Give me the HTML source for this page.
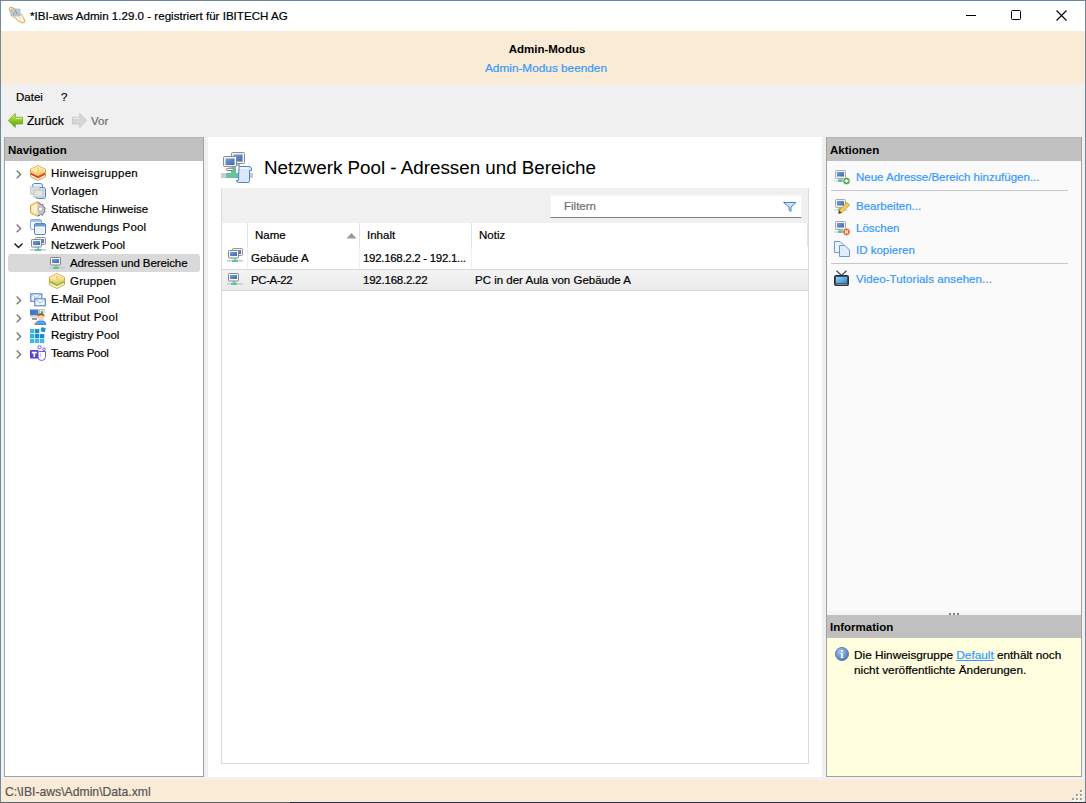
<!DOCTYPE html>
<html><head><meta charset="utf-8">
<style>
*{margin:0;padding:0;box-sizing:border-box}
html,body{width:1086px;height:803px;overflow:hidden;background:#f0f0f0;font-family:"Liberation Sans",sans-serif;font-size:11.5px;color:#000}
.a{position:absolute}
.t{position:absolute;white-space:nowrap;line-height:14px;font-size:11.5px;-webkit-text-stroke:0.2px currentColor}
.lnk{color:#3399ff}
svg{position:absolute;overflow:visible}
.t[style*="bold"]{-webkit-text-stroke:0}
</style></head><body>
<svg width="0" height="0" style="position:absolute"><defs>
<linearGradient id="gbox" x1="0" y1="0" x2="0" y2="1"><stop offset="0" stop-color="#fff4c8"/><stop offset="1" stop-color="#f0c050"/></linearGradient>
<linearGradient id="gscr" x1="0" y1="0" x2="1" y2="1"><stop offset="0" stop-color="#7aa0dc"/><stop offset="1" stop-color="#3a68b0"/></linearGradient>
<symbol id="ibox_r" viewBox="0 0 16 16"><path d="M8 0.5L15.5 4.3V11.7L8 15.5L0.5 11.7V4.3Z" fill="#fff6dc" stroke="#daa23a"/><path d="M8 1L15 4.5V8L8 11.5L1 8V4.5Z" fill="url(#gbox)"/><path d="M8 1L1 4.5L8 8Z" fill="#fde9a8"/><path d="M8 2.5V7.5" stroke="#e8b450" stroke-width="0.8"/><path d="M1 7.8L8 11.3L15 7.8V9.8L8 13.3L1 9.8Z" fill="#cc3a28"/><path d="M8 11.3L15 7.8V9.8L8 13.3Z" fill="#dd5030"/></symbol>
<symbol id="ibox_g" viewBox="0 0 16 16"><path d="M8 0.5L15.5 4.3V11.7L8 15.5L0.5 11.7V4.3Z" fill="#fff6dc" stroke="#daa23a"/><path d="M8 1L15 4.5V8L8 11.5L1 8V4.5Z" fill="url(#gbox)"/><path d="M8 1L1 4.5L8 8Z" fill="#fde9a8"/><path d="M8 2.5V7.5" stroke="#e8b450" stroke-width="0.8"/><path d="M1 7.8L8 11.3L15 7.8V9.8L8 13.3L1 9.8Z" fill="#7cc030"/><path d="M8 11.3L15 7.8V9.8L8 13.3Z" fill="#9ad040"/></symbol>
<symbol id="itpl" viewBox="0 0 16 16"><rect x="2.5" y="0.5" width="10" height="11" rx="2" fill="#e8f0fc" stroke="#4a86d0"/><rect x="5.5" y="4.5" width="10" height="11" rx="2" fill="#d0e2f8" stroke="#4a86d0"/><rect x="0.5" y="4" width="9" height="7" fill="#e0e0e0" stroke="#c8c8c8"/><rect x="4" y="7" width="9" height="7" fill="#e4e4e4" stroke="#c0c0c0"/></symbol>
<symbol id="istat" viewBox="0 0 16 16"><path d="M8 0.5V15.5L0.5 11.7V4.3Z" fill="#fbe0a0" stroke="#d9a23c"/><path d="M2 5L7.5 2.2V13.8L2 11Z" fill="#fdf0c8"/><path d="M8 2.5L9.8 1.8L10.8 3.8L13 3.3L13.3 5.8L15.5 7L14.2 9L15.3 11L13 12L12.8 14.3L10.5 13.5L9 15L8 14" fill="#c8c8c8" stroke="#707070" stroke-width="0.9"/><circle cx="10.3" cy="8" r="2" fill="#fff" stroke="#909090" stroke-width="0.6"/></symbol>
<symbol id="iwin" viewBox="0 0 16 16"><rect x="0.5" y="0.5" width="11" height="10" rx="1.5" fill="#f4f8fe" stroke="#86aee0"/><rect x="1" y="1" width="10" height="2" fill="#a8c6ec"/><rect x="4.5" y="4.5" width="11" height="11" rx="1.5" fill="#fff" stroke="#4e86cc"/><rect x="5" y="5" width="10" height="2.5" fill="#6a9ad8"/><rect x="6" y="9" width="8" height="5" fill="#e8f0fa"/></symbol>
<symbol id="inet1" viewBox="0 0 16 16"><rect x="1.5" y="2.5" width="10" height="7.5" rx="0.8" fill="#f6f6f6" stroke="#7c7c7c" stroke-width="0.9"/><rect x="3" y="4" width="7" height="4" fill="url(#gscr)"/><rect x="5.5" y="10" width="2.5" height="1" fill="#b0b0b0"/><rect x="0" y="12" width="16" height="1.6" fill="#c4ccd4"/><rect x="4" y="12" width="6" height="2" fill="#5cc79c"/><rect x="5.8" y="11" width="2.4" height="1.2" fill="#5cc79c"/></symbol>
<symbol id="inet2" viewBox="0 0 16 16"><rect x="5.5" y="0.5" width="10" height="7" rx="0.8" fill="#f0f0f0" stroke="#8a8a8a" stroke-width="0.9"/><rect x="11" y="2" width="3" height="4" fill="url(#gscr)"/><rect x="1.5" y="2.5" width="10" height="7.5" rx="0.8" fill="#f6f6f6" stroke="#7c7c7c" stroke-width="0.9"/><rect x="3" y="4" width="7" height="4" fill="url(#gscr)"/><rect x="4" y="10" width="3.5" height="1" fill="#b0b0b0"/><rect x="0" y="12" width="16" height="1.6" fill="#c4ccd4"/><rect x="5" y="12" width="6" height="2" fill="#5cc79c"/><rect x="7.4" y="10" width="1.8" height="2.2" fill="#5cc79c"/></symbol>
<symbol id="imail" viewBox="0 0 16 16"><rect x="0.8" y="2.8" width="11" height="7.5" fill="#eef4fc" stroke="#5a8ed0" stroke-width="1.2"/><path d="M1.5 3.5L6.3 7L11 3.5" fill="none" stroke="#8ab0e0" stroke-width="0.8"/><rect x="4.8" y="7.8" width="10.5" height="7" fill="#f4f8fe" stroke="#5a8ed0" stroke-width="1.2"/><path d="M5.5 8.5L10 12L15 8.5" fill="none" stroke="#8ab0e0" stroke-width="0.8"/></symbol>
<symbol id="iattr" viewBox="0 0 16 16"><rect x="0" y="0.5" width="8.5" height="6" fill="#4a78c0"/><rect x="0" y="6.5" width="8" height="2" fill="#d8d8d8"/><rect x="2" y="9" width="5" height="1.8" fill="#909090"/><rect x="9.5" y="0.5" width="4.5" height="5" fill="#f0f0f0" stroke="#a0a0a0" stroke-width="0.6"/><rect x="11" y="2.2" width="1.8" height="2" fill="#30a030"/><path d="M5.5 16Q5.5 11.8 11 11.8Q16 11.8 16 16Z" fill="#4aa8f2" stroke="#2848a8" stroke-width="0.9" stroke-dasharray="1 0.6"/><circle cx="11" cy="8" r="3.4" fill="#f6d2b0"/><path d="M7.6 8Q7.4 4.2 11 4.2Q14.6 4.2 14.4 8Q13.5 6 11 6.3Q8.5 6 7.6 8Z" fill="#9a5420"/><rect x="4.5" y="14" width="2" height="2" fill="#e88020"/></symbol>
<symbol id="ireg" viewBox="0 0 16 16"><rect x="0" y="2" width="4.3" height="4.3" fill="#40b8e8"/><rect x="5" y="2" width="4.3" height="4.3" fill="#1a90d0"/><rect x="11" y="0.5" width="4.3" height="4.3" fill="#1a90d0" transform="rotate(12 13 2.5)"/><rect x="0" y="7" width="4.3" height="4.3" fill="#30b0e8"/><rect x="5" y="7" width="4.3" height="4.3" fill="#1a8cd0"/><rect x="10" y="7" width="4.3" height="4.3" fill="#1a8cd0"/><rect x="0" y="12" width="4.3" height="4" fill="#40b8e8"/><rect x="5" y="12" width="4.3" height="4" fill="#40b8e8"/><rect x="10" y="12" width="4.3" height="4" fill="#40b8e8"/></symbol>
<symbol id="iteams" viewBox="0 0 16 16"><circle cx="9.5" cy="2.3" r="1.7" fill="none" stroke="#6f5ce0" stroke-width="1"/><circle cx="14" cy="4.3" r="1.3" fill="none" stroke="#6f5ce0" stroke-width="1"/><path d="M8.5 6.5H15.5V11.5Q15.5 15.5 11.8 15.5Q8 15.5 8 12" fill="#fff" stroke="#6f5ce0" stroke-width="1"/><path d="M10.5 8V12" stroke="#b8b0f0" stroke-width="0.8"/><rect x="0" y="5" width="8.5" height="8.5" rx="0.8" fill="#5a40d8"/><path d="M1.8 6.8H6.8V8.5H5.1V12H3.5V8.5H1.8Z" fill="#fff"/></symbol>
<symbol id="imon" viewBox="0 0 16 16"><rect x="1.5" y="1.5" width="10" height="8" rx="0.8" fill="#f2f2f2" stroke="#a8a8a8"/><rect x="3" y="3" width="7" height="4.5" fill="url(#gscr)"/><rect x="5" y="9.5" width="3" height="1.3" fill="#b8b8b8"/><rect x="0" y="11.5" width="14" height="1" fill="#c4ccd2"/><rect x="4" y="10.5" width="5" height="2.5" fill="#60c49c"/></symbol>
<symbol id="ichev" viewBox="0 0 16 16"><path d="M5.7 5.6L9.6 9.4L5.7 13.2" fill="none" stroke="#7a7a7a" stroke-width="1.45"/></symbol>
<symbol id="ichevd" viewBox="0 0 16 16"><path d="M4.5 6.5L8.5 10.4L12.5 6.5" fill="none" stroke="#1e1e1e" stroke-width="1.45"/></symbol>
</defs></svg>
<!-- window frame -->
<div class="a" style="left:0;top:0;width:1086px;height:803px;border:1px solid #71879a;border-bottom-color:#5a6470"></div>
<!-- title bar -->
<div class="a" style="left:1px;top:1px;width:1084px;height:30px;background:#fff"></div>
<div class="t" style="left:30px;top:9px;font-size:11.6px">*IBI-aws Admin 1.29.0 - registriert für IBITECH AG</div>
<!-- window controls -->
<div class="a" style="left:966px;top:15px;width:10px;height:1px;background:#000"></div>
<div class="a" style="left:1011px;top:10px;width:10px;height:10px;border:1px solid #000;border-radius:1.5px"></div>
<svg style="left:1056px;top:10px" width="12" height="12"><path d="M0.5 0.5L10.5 10.5M10.5 0.5L0.5 10.5" stroke="#000" stroke-width="1.1"/></svg>

<!-- admin banner -->
<div class="a" style="left:1px;top:31px;width:1084px;height:53px;background:#faebd7"></div>
<div class="t" style="left:0;width:1094px;text-align:center;top:42px;font-weight:bold">Admin-Modus</div>
<div class="t lnk" style="left:0;width:1092px;text-align:center;top:61px;font-size:11.8px">Admin-Modus beenden</div>

<!-- menu -->
<div class="t" style="left:16px;top:90px">Datei</div>
<div class="t" style="left:61px;top:90px">?</div>
<div class="t" style="left:27px;top:114px;font-size:12px">Zurück</div>
<div class="t" style="left:91px;top:114px;color:#6d6d6d">Vor</div>

<!-- navigation panel -->
<div class="a" style="left:4px;top:137px;width:200px;height:640px;border:1px solid #a0a0a0;border-top-color:#b4b4b4;background:#fff"></div>
<div class="a" style="left:5px;top:138px;width:198px;height:23px;background:#c0c0c0"></div>
<div class="t" style="left:8px;top:143px;font-weight:bold">Navigation</div>
<div class="a" style="left:8px;top:254px;width:192px;height:18px;background:#d9d9d9;border-radius:3px"></div>
<svg style="left:11px;top:165px" width="16" height="16"><use href="#ichev"/></svg><svg style="left:30px;top:165px" width="16" height="16"><use href="#ibox_r"/></svg><div class="t" style="left:51px;top:166px;letter-spacing:0.33px">Hinweisgruppen</div>
<svg style="left:30px;top:183px" width="16" height="16"><use href="#itpl"/></svg><div class="t" style="left:51px;top:184px;letter-spacing:0.2px">Vorlagen</div>
<svg style="left:30px;top:201px" width="16" height="16"><use href="#istat"/></svg><div class="t" style="left:51px;top:202px">Statische Hinweise</div>
<svg style="left:11px;top:219px" width="16" height="16"><use href="#ichev"/></svg><svg style="left:30px;top:219px" width="16" height="16"><use href="#iwin"/></svg><div class="t" style="left:51px;top:220px;letter-spacing:0.17px">Anwendungs Pool</div>
<svg style="left:10px;top:237px" width="16" height="16"><use href="#ichevd"/></svg><svg style="left:30px;top:237px" width="16" height="16"><use href="#inet2"/></svg><div class="t" style="left:51px;top:238px">Netzwerk Pool</div>
<svg style="left:49px;top:255px" width="16" height="16"><use href="#inet1"/></svg><div class="t" style="left:70px;top:256px;letter-spacing:-0.1px">Adressen und Bereiche</div>
<svg style="left:49px;top:273px" width="16" height="16"><use href="#ibox_g"/></svg><div class="t" style="left:70px;top:274px;letter-spacing:0.2px">Gruppen</div>
<svg style="left:11px;top:291px" width="16" height="16"><use href="#ichev"/></svg><svg style="left:30px;top:291px" width="16" height="16"><use href="#imail"/></svg><div class="t" style="left:51px;top:292px">E-Mail Pool</div>
<svg style="left:11px;top:309px" width="16" height="16"><use href="#ichev"/></svg><svg style="left:30px;top:309px" width="16" height="16"><use href="#iattr"/></svg><div class="t" style="left:51px;top:310px;letter-spacing:0.35px">Attribut Pool</div>
<svg style="left:11px;top:327px" width="16" height="16"><use href="#ichev"/></svg><svg style="left:30px;top:327px" width="16" height="16"><use href="#ireg"/></svg><div class="t" style="left:51px;top:328px">Registry Pool</div>
<svg style="left:11px;top:345px" width="16" height="16"><use href="#ichev"/></svg><svg style="left:30px;top:345px" width="16" height="16"><use href="#iteams"/></svg><div class="t" style="left:51px;top:346px;letter-spacing:-0.24px">Teams Pool</div>


<!-- center panel -->
<div class="a" style="left:208px;top:137px;width:614px;height:640px;background:#fff"></div>
<svg style="left:221px;top:152px" width="32" height="32" viewBox="0 0 32 32">
<rect x="0" y="21" width="32" height="5" fill="#c8cccf"/><rect x="5" y="21" width="14" height="5" fill="#66c49c"/><rect x="10" y="13" width="5" height="9" fill="#66c49c"/>
<rect x="10.5" y="0.5" width="13" height="11" rx="1" fill="#efefef" stroke="#8c8c8c"/><rect x="12.5" y="2.5" width="9" height="7" fill="url(#gscr)"/><rect x="13" y="12" width="6" height="2" fill="#b0b0b0"/>
<rect x="2.5" y="4.5" width="13" height="10" rx="1" fill="#f2f2f2" stroke="#8c8c8c"/><rect x="4.5" y="6.5" width="9" height="6.5" fill="url(#gscr)"/><rect x="5.5" y="16.5" width="7" height="2" rx="0.8" fill="#fff" stroke="#7a7a7a"/><rect x="7.5" y="14.5" width="3" height="2" fill="#c8c8c8"/>
<path d="M18 14.5H28Q30.5 14.5 30.5 17V18.5H28.5V28.5Q28.5 30.5 26.5 30.5H17.5Q15.5 30.5 15.5 28.5H17.5Z" fill="#dbe8fb" stroke="#4c82cc"/><path d="M19 16H27" stroke="#fff" stroke-width="1"/>
</svg>
<div class="t" style="left:264px;top:157px;font-size:18.8px;line-height:22px;-webkit-text-stroke:0.05px #000">Netzwerk Pool - Adressen und Bereiche</div>
<div class="a" style="left:221px;top:188px;width:588px;height:576px;border:1px solid #dadada;background:#fff"></div>
<div class="a" style="left:222px;top:188px;width:586px;height:35px;background:#f0f0f0"></div>
<div class="a" style="left:550px;top:195px;width:252px;height:23px;background:#fff;border:1px solid #f6f6f6;border-bottom:1px solid #808080;border-radius:1px"></div>
<div class="t" style="left:564px;top:199px;color:#6d6d6d">Filtern</div>
<div class="a" style="left:222px;top:223px;width:586px;height:24px;background:#fff"></div>
<div class="a" style="left:247px;top:223px;width:1px;height:24px;background:#e3e3e3"></div>
<div class="a" style="left:359px;top:223px;width:1px;height:24px;background:#e3e3e3"></div>
<div class="a" style="left:471px;top:223px;width:1px;height:24px;background:#e3e3e3"></div>
<div class="a" style="left:807px;top:223px;width:1px;height:24px;background:#e3e3e3"></div>
<div class="a" style="left:247px;top:247px;width:1px;height:22px;background:#f0f0f0"></div>
<div class="a" style="left:359px;top:247px;width:1px;height:22px;background:#f0f0f0"></div>
<div class="a" style="left:471px;top:247px;width:1px;height:22px;background:#f0f0f0"></div>
<div class="t" style="left:255px;top:228px">Name</div>
<svg style="left:346px;top:232px" width="11" height="7"><path d="M0.5 6.5L5.5 1L10.5 6.5Z" fill="#9a9a9a"/></svg>
<div class="t" style="left:367px;top:228px">Inhalt</div>
<div class="t" style="left:479px;top:228px">Notiz</div>
<svg style="left:227px;top:248px" width="16" height="16"><use href="#inet2"/></svg>
<div class="t" style="left:251px;top:251px">Gebäude A</div>
<div class="t" style="left:363px;top:251px;letter-spacing:-0.3px">192.168.2.2 - 192.1...</div>
<div class="a" style="left:222px;top:269px;width:586px;height:22px;background:linear-gradient(#f3f3f3,#ebebeb);border-top:1px solid #d9d9d9;border-bottom:1px solid #d9d9d9"></div>
<svg style="left:227px;top:271px" width="16" height="16"><use href="#inet1"/></svg>
<div class="t" style="left:251px;top:273px;letter-spacing:-0.4px">PC-A-22</div>
<div class="t" style="left:363px;top:273px;letter-spacing:-0.23px">192.168.2.22</div>
<div class="t" style="left:475px;top:273px">PC in der Aula von Gebäude A</div>
<svg style="left:783px;top:202px" width="14" height="10" viewBox="0 0 14 10"><path d="M0.5 0.5H13L8 5V9.5L6 8V5Z" fill="#cfe2fa" stroke="#3e86d6"/></svg>


<!-- actions panel -->
<div class="a" style="left:826px;top:137px;width:256px;height:640px;border:1px solid #a0a0a0;border-top-color:#b4b4b4;background:#fafafa"></div>
<div class="a" style="left:827px;top:138px;width:254px;height:23px;background:#c0c0c0"></div>
<div class="t" style="left:830px;top:143px;font-weight:bold">Aktionen</div>
<div class="a" style="left:831px;top:190px;width:237px;height:1px;background:#c8c8c8"></div>
<div class="a" style="left:831px;top:263px;width:237px;height:1px;background:#c8c8c8"></div>
<svg style="left:834px;top:169px" width="16" height="16" viewBox="0 0 16 16"><use href="#imon"/><circle cx="12.5" cy="12" r="3.6" fill="#3c9e3c" stroke="#e8f4e8" stroke-width="0.7"/><path d="M12.5 10V14M10.5 12H14.5" stroke="#fff" stroke-width="1.4"/></svg>
<div class="t lnk" style="left:856px;top:170px">Neue Adresse/Bereich hinzufügen...</div>
<svg style="left:834px;top:198px" width="16" height="16" viewBox="0 0 16 16"><use href="#imon"/><path d="M4.5 15.5L5.5 12L13 4.5L15.5 7L8 14.5Z" fill="#f7cf52" stroke="#c08428" stroke-width="0.8"/><path d="M4.5 15.5L5.3 12.5L7.5 14.7Z" fill="#5a3010"/></svg>
<div class="t lnk" style="left:856px;top:199px">Bearbeiten...</div>
<svg style="left:834px;top:220px" width="16" height="16" viewBox="0 0 16 16"><use href="#imon"/><circle cx="12.5" cy="11.8" r="3.6" fill="#e4602a" stroke="#f8e0d0" stroke-width="0.7"/><path d="M11 10.3L14 13.3M14 10.3L11 13.3" stroke="#fff" stroke-width="1.2"/></svg>
<div class="t lnk" style="left:856px;top:221px">Löschen</div>
<svg style="left:834px;top:241px" width="16" height="16" viewBox="0 0 16 16"><path d="M0.5 0.5H6L9.5 4V11.5H0.5Z" fill="#eef4fc" stroke="#6a98d4"/><path d="M5.5 4.5H11L15.5 9V15.5H5.5Z" fill="#e2ecfa" stroke="#6a98d4"/></svg>
<div class="t lnk" style="left:856px;top:243px">ID kopieren</div>
<svg style="left:834px;top:270px" width="16" height="16" viewBox="0 0 16 16"><defs><linearGradient id="gtv" x1="0" y1="0" x2="1" y2="1"><stop offset="0" stop-color="#9ad4fa"/><stop offset="1" stop-color="#2a8ad8"/></linearGradient></defs><path d="M2.5 0.8L7.5 5.5L12.5 0.8" fill="none" stroke="#3a4a5a" stroke-width="1.2"/><rect x="0.5" y="5.5" width="14" height="10" rx="1" fill="#3c4c5c" stroke="#2a3440"/><rect x="2" y="7" width="11" height="6" fill="url(#gtv)"/><rect x="2" y="13.8" width="11" height="1" fill="#909aa4"/><rect x="2" y="13.8" width="2" height="1" fill="#e04040"/></svg>
<div class="t lnk" style="left:856px;top:272px;letter-spacing:0.09px">Video-Tutorials ansehen...</div>
<!-- splitter -->
<div class="a" style="left:827px;top:611px;width:254px;height:4px;background:#f5f5f5"></div>
<div class="a" style="left:949px;top:613px;width:2px;height:2px;background:#808080"></div>
<div class="a" style="left:953px;top:613px;width:2px;height:2px;background:#808080"></div>
<div class="a" style="left:957px;top:613px;width:2px;height:2px;background:#808080"></div>
<!-- information -->
<div class="a" style="left:827px;top:615px;width:254px;height:23px;background:#c0c0c0"></div>
<div class="t" style="left:830px;top:620px;font-weight:bold">Information</div>
<div class="a" style="left:827px;top:638px;width:254px;height:138px;background:#ffffe0"></div>
<svg style="left:835px;top:647px" width="14" height="14" viewBox="0 0 14 14"><defs><radialGradient id="ginfo" cx="0.4" cy="0.3" r="0.8"><stop offset="0" stop-color="#a8c8f0"/><stop offset="1" stop-color="#3f6fb8"/></radialGradient></defs><circle cx="7" cy="7" r="6.5" fill="url(#ginfo)" stroke="#3a64a8" stroke-width="0.8"/><circle cx="7" cy="4" r="1" fill="#fff"/><path d="M5.5 6H7.8V10.2H8.6V11H5.4V10.2H6.2V6.8H5.5Z" fill="#fff"/></svg>
<div class="t" style="left:854px;top:648px;line-height:15px;font-size:11.8px">Die Hinweisgruppe <span style="color:#3399ff;text-decoration:underline">Default</span> enthält noch<br>nicht veröffentlichte Änderungen.</div>


<!-- status bar -->
<div class="a" style="left:1px;top:780px;width:1084px;height:22px;background:#faebd7"></div>
<div class="t" style="left:5px;top:785px;color:#555;font-size:12.2px">C:\IBI-aws\Admin\Data.xml</div>
<svg style="left:8px;top:113px" width="16" height="16" viewBox="0 0 16 16"><defs><linearGradient id="ggr" x1="0" y1="0" x2="0" y2="1"><stop offset="0" stop-color="#d4f070"/><stop offset="0.5" stop-color="#8cc828"/><stop offset="1" stop-color="#5a9c10"/></linearGradient></defs><path d="M0.4 7.5L7.2 0.6V4.3H14.6V11H7.2V14.5Z" fill="url(#ggr)" stroke="#6ca81c" stroke-width="0.8"/><path d="M7.8 5.3H14" stroke="#e8ffb0" stroke-width="0.9"/></svg>
<svg style="left:72px;top:113px" width="16" height="16" viewBox="0 0 16 16"><path d="M14.6 7.5L7.8 0.6V4.3H0.4V11H7.8V14.5Z" fill="#d6d6d6" stroke="#c2c2c2" stroke-width="0.8"/><path d="M1 5.3H7.5" stroke="#f4f4f4" stroke-width="0.9"/></svg>
<svg style="left:9px;top:7px" width="17" height="17" viewBox="0 0 17 17"><ellipse cx="8" cy="8" rx="3.4" ry="10.3" transform="rotate(-45 8 8)" fill="#fffaf0" stroke="#eab46a" stroke-width="1.2"/><rect x="2" y="2" width="9" height="7" fill="#b4cde6" stroke="#8aa8c8" stroke-width="0.5"/><path d="M4.5 8L6.5 3.5L8.5 8" fill="none" stroke="#b89030" stroke-width="1"/><path d="M3.5 3.5L12 12" stroke="#f2cc90" stroke-width="1" opacity="0.8"/></svg>
<div class="a" style="left:290px;top:802px;width:796px;height:1px;background:#27324c"></div>
<!-- resize grip -->
<div class="a" style="left:1080px;top:790px;width:2px;height:2px;background:#a0a0a0;box-shadow:1px 1px 0 #fff"></div>
<div class="a" style="left:1076px;top:794px;width:2px;height:2px;background:#a0a0a0;box-shadow:1px 1px 0 #fff"></div>
<div class="a" style="left:1080px;top:794px;width:2px;height:2px;background:#a0a0a0;box-shadow:1px 1px 0 #fff"></div>
<div class="a" style="left:1072px;top:798px;width:2px;height:2px;background:#a0a0a0;box-shadow:1px 1px 0 #fff"></div>
<div class="a" style="left:1076px;top:798px;width:2px;height:2px;background:#a0a0a0;box-shadow:1px 1px 0 #fff"></div>
<div class="a" style="left:1080px;top:798px;width:2px;height:2px;background:#a0a0a0;box-shadow:1px 1px 0 #fff"></div>
</body></html>
